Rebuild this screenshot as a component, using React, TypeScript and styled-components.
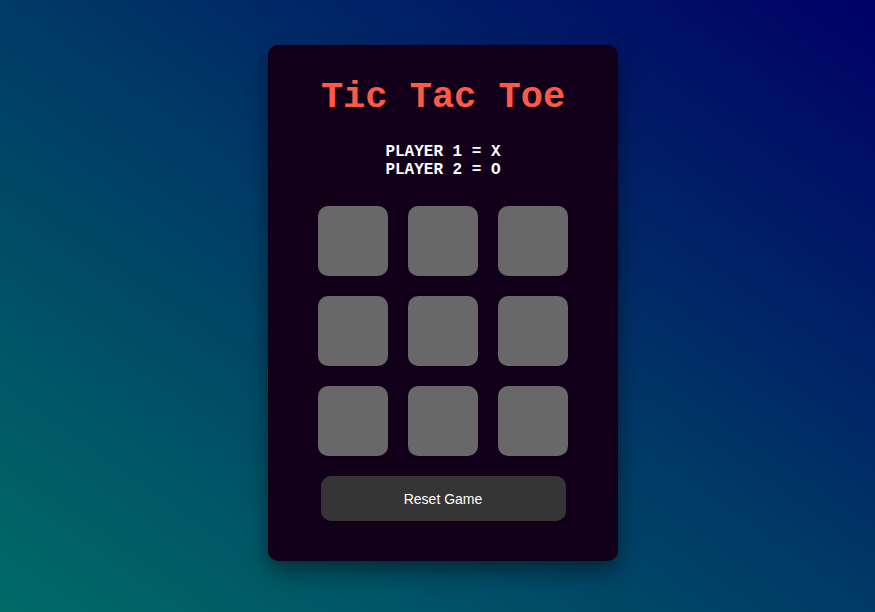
import React from "react";
import styled, { createGlobalStyle } from "styled-components";

const GlobalStyle = createGlobalStyle`
  html, body {
    margin: 0;
    padding: 0;
    height: 100%;
  }
  body {
    font-family: "Liberation Sans", Arial, sans-serif;
  }
`;

const Page = styled.div`
  min-height: 612px;
  box-sizing: border-box;
  display: flex;
  justify-content: center;
  align-items: flex-start;
  padding: 45px 0 0 11px;
  background: linear-gradient(to top right, #006b66 0%, #003a66 50%, #000066 100%);
`;

const Card = styled.div`
  width: 350px;
  height: 516px;
  box-sizing: border-box;
  background: #12001a;
  border-radius: 10px;
  box-shadow: 0 10px 22px rgba(0, 0, 0, 0.45);
  display: flex;
  flex-direction: column;
  align-items: center;
  padding: 31px 0 40px;
`;

const Title = styled.h1`
  margin: 0;
  font-family: "Liberation Mono", "Courier New", monospace;
  font-size: 37px;
  font-weight: 700;
  line-height: 42px;
  color: #ff5a45;
`;

const Players = styled.div`
  margin-top: 25px;
  font-family: "Liberation Mono", "Courier New", monospace;
  font-size: 16px;
  font-weight: 700;
  line-height: 18px;
  color: #ffffff;
  text-align: center;
`;

const Board = styled.div`
  margin-top: 27px;
  display: grid;
  grid-template-columns: repeat(3, 70px);
  grid-auto-rows: 70px;
  gap: 20px;
`;

const Cell = styled.button`
  border: none;
  padding: 0;
  background: #686868;
  border-radius: 10px;
  cursor: pointer;
`;

const ResetButton = styled.button`
  margin-top: 20px;
  width: 245px;
  height: 45px;
  border: none;
  border-radius: 10px;
  background: #353535;
  color: #ffffff;
  font-family: "Liberation Sans", Arial, sans-serif;
  font-size: 14px;
  cursor: pointer;
`;

export default function App() {
  const cells = Array.from({ length: 9 }, (_, i) => i);
  return (
    <>
      <GlobalStyle />
      <Page>
        <Card>
          <Title>Tic Tac Toe</Title>
          <Players>
            <div>PLAYER 1 = X</div>
            <div>PLAYER 2 = O</div>
          </Players>
          <Board>
            {cells.map((i) => (
              <Cell key={i} aria-label={`cell ${i + 1}`} />
            ))}
          </Board>
          <ResetButton>Reset Game</ResetButton>
        </Card>
      </Page>
    </>
  );
}
